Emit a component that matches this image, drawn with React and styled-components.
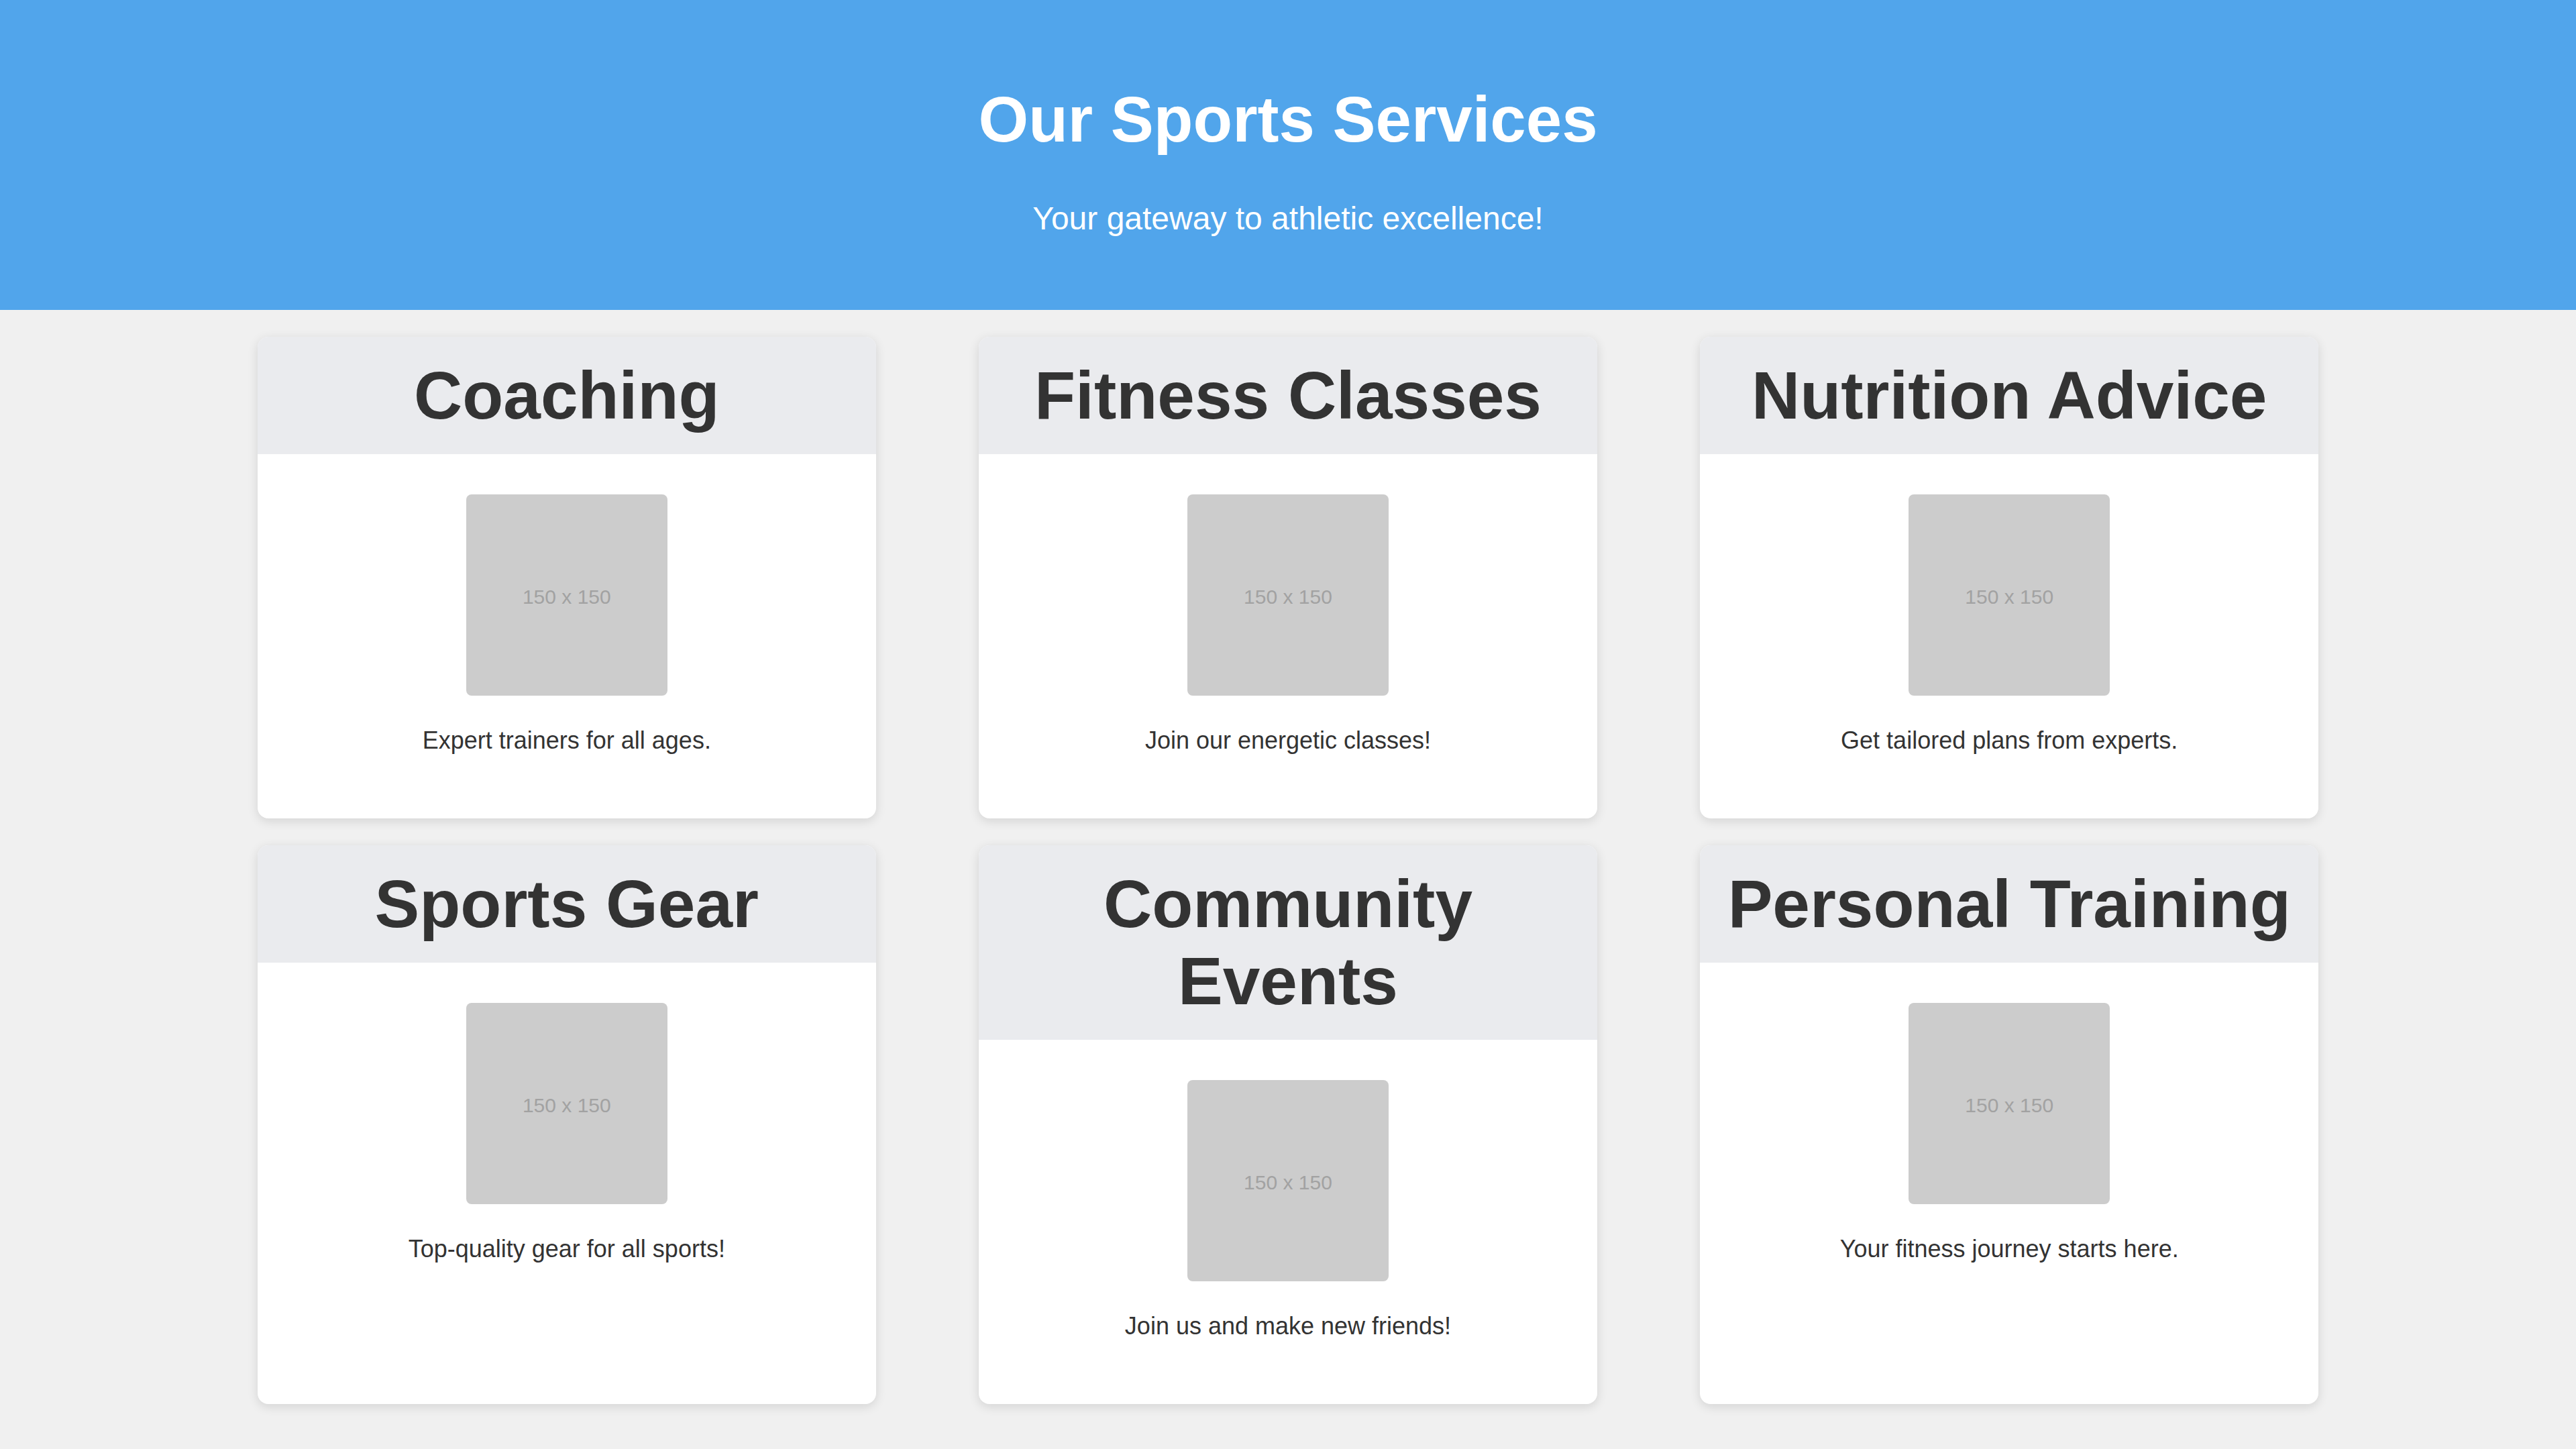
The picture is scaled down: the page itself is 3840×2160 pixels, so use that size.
import React from "react";
import styled, { createGlobalStyle } from "styled-components";

const services = [
    { title: "Coaching", text: "Expert trainers for all ages." },
    { title: "Fitness Classes", text: "Join our energetic classes!" },
    { title: "Nutrition Advice", text: "Get tailored plans from experts." },
    { title: "Sports Gear", text: "Top-quality gear for all sports!" },
    { title: "Community Events", text: "Join us and make new friends!" },
    { title: "Personal Training", text: "Your fitness journey starts here." },
];

const GlobalStyle = createGlobalStyle`
    * { box-sizing: border-box; }
    body {
        margin: 0;
        background: #f0f0f0;
        font-family: "Liberation Sans", Arial, sans-serif;
        color: #333333;
    }
`;

const App = () => {
    return (
        <React.Fragment>
            <GlobalStyle />
            <Header>
                <Title>Our Sports Services</Title>
                <Tagline>Your gateway to athletic excellence!</Tagline>
            </Header>
            <CardList>
                {services.map((s) => (
                    <Card key={s.title}>
                        <CardHead>
                            <CardTitle>{s.title}</CardTitle>
                        </CardHead>
                        <CardBody>
                            <Placeholder>150 x 150</Placeholder>
                            <CardText>{s.text}</CardText>
                        </CardBody>
                    </Card>
                ))}
            </CardList>
        </React.Fragment>
    );
};

export default App;

const Header = styled.header`
    background: #51a5eb;
    color: #ffffff;
    text-align: center;
    padding: 40px 20px;
    height: 462px;
`;

const Title = styled.h1`
    margin: 83px 0 0;
    font-size: 96px;
    line-height: 110px;
    font-weight: bold;
`;

const Tagline = styled.p`
    margin: 65px 0 0;
    font-size: 48px;
    line-height: 55px;
`;

const CardList = styled.main`
    width: 80%;
    margin: 0 auto;
    padding: 20px 0;
    display: flex;
    flex-wrap: wrap;
    justify-content: space-between;
`;

const Card = styled.section`
    width: 30%;
    margin: 20px 0;
    background: #ffffff;
    border-radius: 16px;
    overflow: hidden;
    box-shadow: 0 4px 16px rgba(0, 0, 0, 0.12);
    display: flex;
    flex-direction: column;
`;

const CardHead = styled.div`
    background: #eaebee;
    padding: 30px 20px;
    text-align: center;
`;

const CardTitle = styled.h2`
    margin: 0;
    font-size: 100px;
    line-height: 115px;
    font-weight: bold;
    color: #333333;
`;

const CardBody = styled.div`
    flex: 1;
    padding: 60px 30px 96px;
    display: flex;
    flex-direction: column;
    align-items: center;
`;

const Placeholder = styled.div`
    width: 300px;
    height: 300px;
    border-radius: 8px;
    background: #cccccc;
    color: #a2a2a2;
    font-size: 30px;
    padding-top: 6px;
    display: flex;
    align-items: center;
    justify-content: center;
`;

const CardText = styled.p`
    margin: 46px 0 0;
    font-size: 36px;
    line-height: 41px;
    color: #333333;
    text-align: center;
`;
